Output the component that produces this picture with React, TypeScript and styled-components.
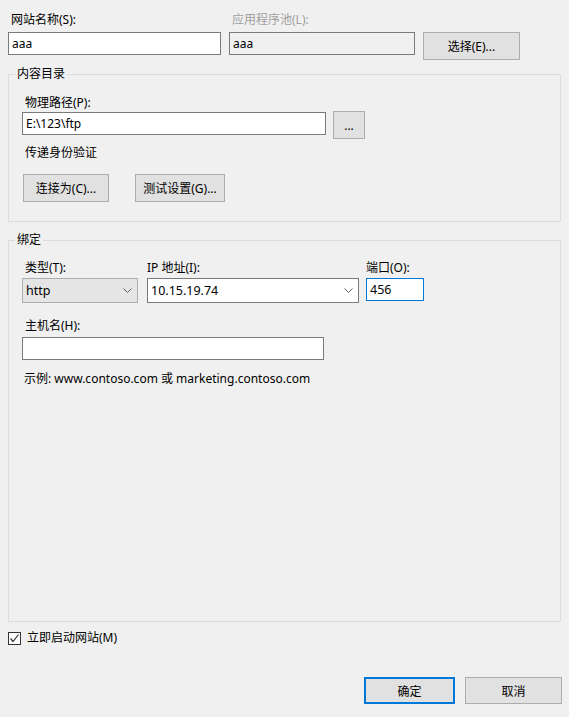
import React from "react";
import styled, { createGlobalStyle } from "styled-components";

const GlobalStyle = createGlobalStyle`
  html, body {
    margin: 0;
    padding: 0;
    background: #f0f0f0;
  }
  body {
    font-family: "Noto Sans", "Noto Sans CJK SC", sans-serif;
    font-size: 12px;
    color: #000;
  }
`;

// Dialog shell
const Dialog = styled.div`
  width: 569px;
  height: 717px;
  box-sizing: border-box;
  padding: 12px 8px 0 8px;
  background: #f0f0f0;
  display: flex;
  flex-direction: column;
`;

const TopGrid = styled.div`
  display: grid;
  grid-template-columns: 213px 186px 97px;
  column-gap: 8px;
  row-gap: 4px;
  align-items: start;
`;

const Label = styled.div<{ $disabled?: boolean; $indent?: number }>`
  line-height: 16px;
  height: 16px;
  white-space: nowrap;
  padding-left: ${(p) => p.$indent ?? 3}px;
  color: ${(p) => (p.$disabled ? "#a0a0a0" : "#000")};
`;

const TextBox = styled.div<{ $w?: number; $disabled?: boolean; $focused?: boolean }>`
  box-sizing: border-box;
  width: ${(p) => (p.$w ? `${p.$w}px` : "100%")};
  height: 23px;
  border: 1px solid ${(p) => (p.$focused ? "#0078d7" : "#7a7a7a")};
  background: ${(p) => (p.$disabled ? "#f0f0f0" : "#fff")};
  padding-left: 3px;
  display: flex;
  align-items: center;
  font-size: 12px;
  white-space: nowrap;
`;

const Button = styled.button<{ $w: number; $h?: number; $default?: boolean }>`
  box-sizing: border-box;
  width: ${(p) => p.$w}px;
  height: ${(p) => p.$h ?? 28}px;
  margin: 0;
  padding: 0;
  font-family: inherit;
  font-size: 12px;
  color: #000;
  background: #e1e1e1;
  border: ${(p) => (p.$default ? "2px solid #0078d7" : "1px solid #adadad")};
  display: flex;
  align-items: center;
  justify-content: center;
`;

// Group box
const Group = styled.div<{ $h: number; $mt: number; $pt: number }>`
  position: relative;
  box-sizing: border-box;
  height: ${(p) => p.$h}px;
  margin-top: ${(p) => p.$mt}px;
  padding: ${(p) => p.$pt}px 0 0 13px;
  border: 1px solid #dcdcdc;
  display: flex;
  flex-direction: column;
`;

const Legend = styled.span`
  position: absolute;
  top: -9px;
  left: 6px;
  padding: 0 2px;
  line-height: 16px;
  background: #f0f0f0;
`;

const PathRow = styled.div`
  display: flex;
  align-items: flex-start;
  gap: 7px;
  margin-top: 1px;
`;

const ButtonRow = styled.div<{ $gap: number; $mt: number }>`
  display: flex;
  gap: ${(p) => p.$gap}px;
  margin-top: ${(p) => p.$mt}px;
  margin-left: 1px;
`;

const Spaced = styled.div<{ $mt: number }>`
  margin-top: ${(p) => p.$mt}px;
`;

const BindGrid = styled.div`
  display: grid;
  grid-template-columns: 125px 219px 58px;
  row-gap: 2px;
  align-items: start;
`;

const Combo = styled.div<{ $w: number; $readonly?: boolean }>`
  box-sizing: border-box;
  width: ${(p) => p.$w}px;
  height: 25px;
  border: 1px solid ${(p) => (p.$readonly ? "#adadad" : "#7a7a7a")};
  background: ${(p) => (p.$readonly ? "#e5e5e5" : "#fff")};
  display: flex;
  align-items: center;
  justify-content: space-between;
  padding: 0 5px 0 3px;
`;

const Value = styled.span`
  font-size: 12.5px;
`;

const CheckRow = styled.label`
  display: flex;
  align-items: center;
  gap: 6px;
  height: 16px;
  margin-top: 8px;
  line-height: 16px;
`;

const CheckBox = styled.span`
  box-sizing: border-box;
  width: 13px;
  height: 13px;
  border: 1px solid #333;
  background: #fff;
  display: flex;
  align-items: center;
  justify-content: center;
`;

const Footer = styled.div`
  display: flex;
  justify-content: flex-end;
  gap: 10px;
  margin-top: 31px;
  margin-right: -1px;
`;

const Chevron = () => (
  <svg width="9" height="5" viewBox="0 0 9 5">
    <polyline points="0.5,0.5 4.5,4.5 8.5,0.5" fill="none" stroke="#606060" strokeWidth="1" />
  </svg>
);

const Check = () => (
  <svg width="11" height="11" viewBox="0 0 11 11">
    <polyline points="1.5,5.5 4,8.5 9.5,1.5" fill="none" stroke="#333" strokeWidth="1.2" />
  </svg>
);

export default function App() {
  return (
    <>
      <GlobalStyle />
      <Dialog>
        {/* site name / app pool */}
        <TopGrid>
          <Label>网站名称(S):</Label>
          <Label $disabled>应用程序池(L):</Label>
          <div />
          <TextBox>aaa</TextBox>
          <TextBox $disabled>aaa</TextBox>
          <Button $w={97}>选择(E)...</Button>
        </TopGrid>

        {/* content directory */}
        <Group $h={148} $mt={14} $pt={20}>
          <Legend>内容目录</Legend>
          <Label>物理路径(P):</Label>
          <PathRow>
            <TextBox $w={304}>E:\123\ftp</TextBox>
            <Button $w={32} style={{ marginTop: -1 }}>...</Button>
          </PathRow>
          <Spaced $mt={6}>
            <Label>传递身份验证</Label>
          </Spaced>
          <ButtonRow $gap={26} $mt={13}>
            <Button $w={86}>连接为(C)...</Button>
            <Button $w={90}>测试设置(G)...</Button>
          </ButtonRow>
        </Group>

        {/* binding */}
        <Group $h={382} $mt={18} $pt={19}>
          <Legend>绑定</Legend>
          <BindGrid>
            <Label>类型(T):</Label>
            <Label $indent={0}>IP 地址(I):</Label>
            <Label $indent={0}>端口(O):</Label>
            <Combo $w={116} $readonly>
              <Value>http</Value>
              <Chevron />
            </Combo>
            <Combo $w={212}>
              <Value>10.15.19.74</Value>
              <Chevron />
            </Combo>
            <TextBox $w={58} $focused>
              <Value>456</Value>
            </TextBox>
          </BindGrid>
          <Spaced $mt={15}>
            <Label>主机名(H):</Label>
          </Spaced>
          <Spaced $mt={3}>
            <TextBox $w={302} />
          </Spaced>
          <Spaced $mt={11}>
            <Label $indent={2}>示例: www.contoso.com 或 marketing.contoso.com</Label>
          </Spaced>
        </Group>

        <CheckRow>
          <CheckBox>
            <Check />
          </CheckBox>
          立即启动网站(M)
        </CheckRow>

        <Footer>
          <Button $w={91} $h={27} $default>确定</Button>
          <Button $w={97} $h={27}>取消</Button>
        </Footer>
      </Dialog>
    </>
  );
}
